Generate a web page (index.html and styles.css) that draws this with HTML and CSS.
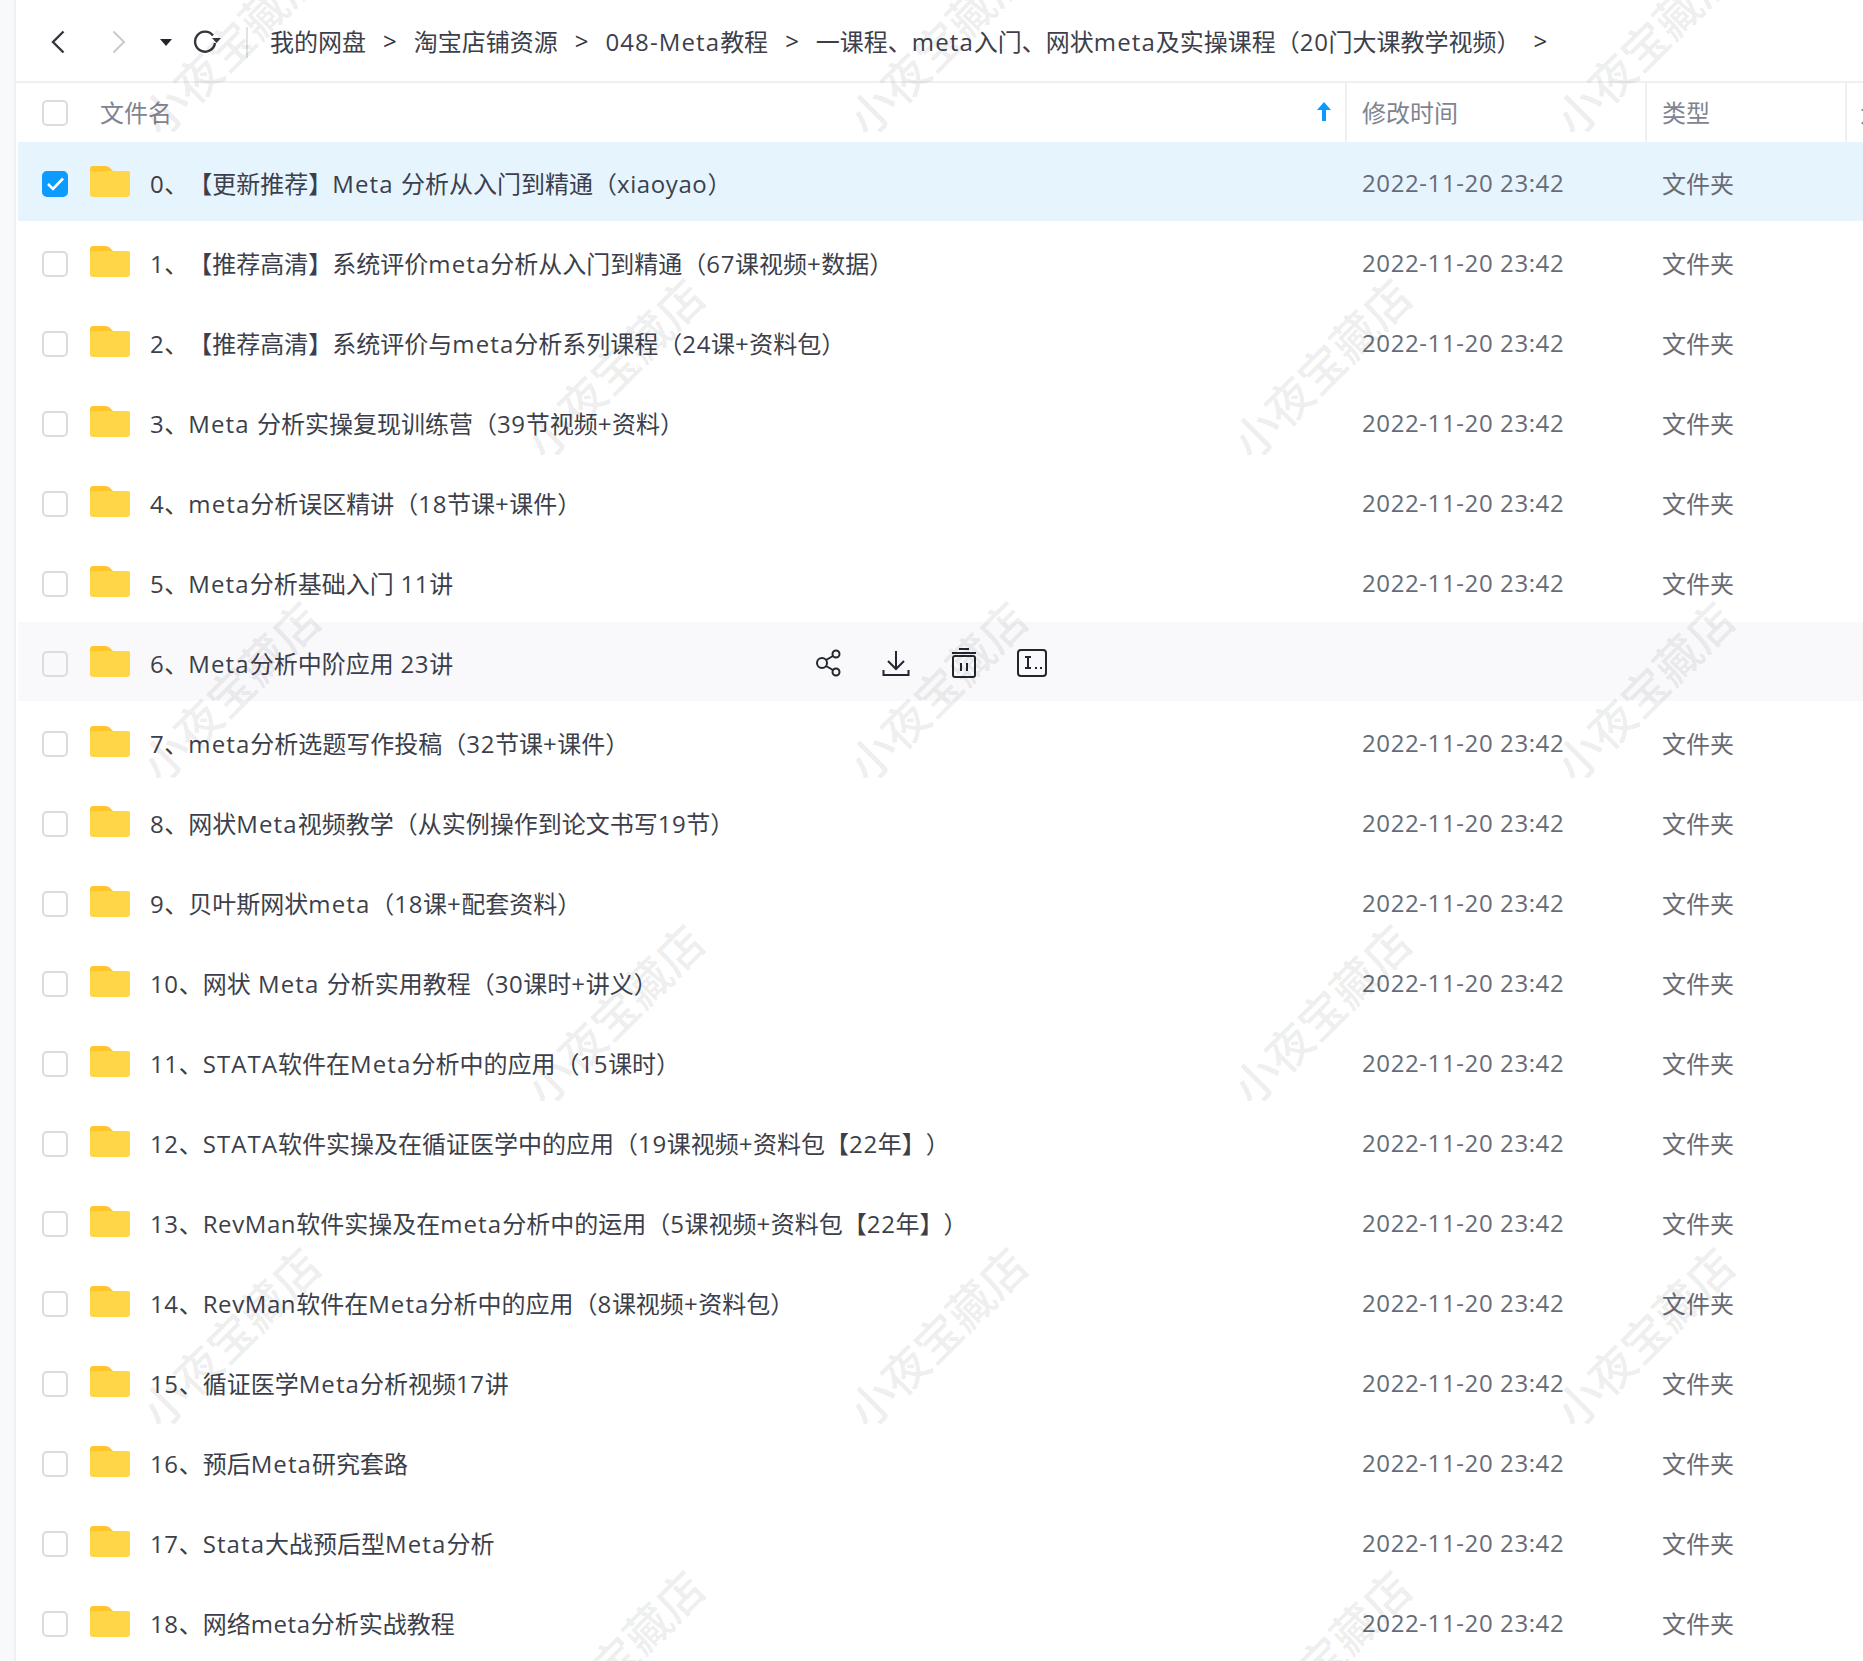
FILE: index.html

```html
<!DOCTYPE html>
<html lang="zh-CN">
<head>
  <meta charset="UTF-8" />
  <title>我的网盘</title>
  <link rel="stylesheet" href="styles.css">
</head>
<body>
  <svg class="defs" width="0" height="0">
    <symbol id="folder" viewBox="0 0 40 31">
      <path d="M0 3a3 3 0 0 1 3-3h12c3 0 4 1 6 3l2 2H37a3 3 0 0 1 3 3v6H0z" fill="#ffc529"/>
      <path d="M0 7a2 2 0 0 1 2-2h35a3 3 0 0 1 3 3v20a3 3 0 0 1-3 3H3a3 3 0 0 1-3-3z" fill="#ffd648"/>
    </symbol>
  </svg>

  <div class="side"></div>

  <div class="main">
    <div class="toolbar">
      <svg class="nav-back" width="14" height="24" viewBox="0 0 14 24"><path d="M12.500 1.500 2 12l10.500 10.500" fill="none" stroke="#33363f" stroke-width="2.400"/></svg>
      <svg class="nav-fwd" width="14" height="24" viewBox="0 0 14 24"><path d="M1.500 1.500 12 12 1.500 22.500" fill="none" stroke="#c9cacd" stroke-width="2"/></svg>
      <span class="nav-drop"></span>
      <svg class="nav-refresh" width="28" height="24" viewBox="0 0 28 24"><path d="M20 5.500A10 10 0 1 0 22 13" fill="none" stroke="#33363f" stroke-width="2.400"/><path d="M19 8h9l-4.500 5z" fill="#33363f"/></svg>
      <span class="nav-line"></span>
      <div class="crumbs">
        <span>我的网盘</span><b>&gt;</b>
        <span>淘宝店铺资源</span><b>&gt;</b>
        <span><span class="la">048-Meta</span>教程</span><b>&gt;</b>
        <span>一课程、<span class="la">meta</span>入门、网状<span class="la">meta</span>及实操课程（<span class="nu">20</span>门大课教学视频）</span><b class="last">&gt;</b>
      </div>
    </div>

    <div class="head">
      <div class="cell-name">
        <span class="check"></span>
        <span class="head-title">文件名</span>
        <svg class="sort" width="16" height="19" viewBox="0 0 16 19"><path d="M8 0 15 8H10V19H6V8H1z" fill="#0b9bff"/></svg>
      </div>
      <div class="head-col">修改时间</div>
      <div class="head-col">类型</div>
      <div class="head-col">大小</div>
    </div>

    <div class="row active">
      <div class="cell-name">
        <span class="check on"><svg width="19" height="15" viewBox="0 0 19 15"><path d="M2 8l5 5L17 2.500" fill="none" stroke="#fff" stroke-width="2.600"/></svg></span>
        <svg class="folder"><use href="#folder"/></svg>
        <span class="name"><span class="nu">0</span>、【更新推荐】<span class="la">Meta </span>分析从入门到精通（<span class="nu">xiaoyao</span>）</span>
      </div>
      <div class="date">2022-11-20 23:42</div><div class="type">文件夹</div>
    </div>
    <div class="row">
      <div class="cell-name"><span class="check"></span><svg class="folder"><use href="#folder"/></svg><span class="name"><span class="nu">1</span>、【推荐高清】系统评价<span class="la">meta</span>分析从入门到精通（<span class="nu">67</span>课视频<span class="nu">+</span>数据）</span></div>
      <div class="date">2022-11-20 23:42</div><div class="type">文件夹</div>
    </div>
    <div class="row">
      <div class="cell-name"><span class="check"></span><svg class="folder"><use href="#folder"/></svg><span class="name"><span class="nu">2</span>、【推荐高清】系统评价与<span class="la">meta</span>分析系列课程（<span class="nu">24</span>课<span class="nu">+</span>资料包）</span></div>
      <div class="date">2022-11-20 23:42</div><div class="type">文件夹</div>
    </div>
    <div class="row">
      <div class="cell-name"><span class="check"></span><svg class="folder"><use href="#folder"/></svg><span class="name"><span class="nu">3</span>、<span class="la">Meta </span>分析实操复现训练营（<span class="nu">39</span>节视频<span class="nu">+</span>资料）</span></div>
      <div class="date">2022-11-20 23:42</div><div class="type">文件夹</div>
    </div>
    <div class="row">
      <div class="cell-name"><span class="check"></span><svg class="folder"><use href="#folder"/></svg><span class="name"><span class="nu">4</span>、<span class="la">meta</span>分析误区精讲（<span class="nu">18</span>节课<span class="nu">+</span>课件）</span></div>
      <div class="date">2022-11-20 23:42</div><div class="type">文件夹</div>
    </div>
    <div class="row">
      <div class="cell-name"><span class="check"></span><svg class="folder"><use href="#folder"/></svg><span class="name"><span class="nu">5</span>、<span class="la">Meta</span>分析基础入门<span class="nu"> 11</span>讲</span></div>
      <div class="date">2022-11-20 23:42</div><div class="type">文件夹</div>
    </div>
    <div class="row hover">
      <div class="cell-name">
        <span class="check"></span><svg class="folder"><use href="#folder"/></svg>
        <span class="name name-fixed"><span class="nu">6</span>、<span class="la">Meta</span>分析中阶应用<span class="nu"> 23</span>讲</span>
        <div class="actions">
          <svg width="30" height="30" viewBox="0 0 30 30" fill="none" stroke="#23262e" stroke-width="2"><circle cx="9" cy="15" r="5"/><circle cx="23" cy="6" r="3.500"/><circle cx="23" cy="24" r="3.500"/><path d="M13 12l7-4M13 18l7 4"/></svg>
          <svg width="30" height="30" viewBox="0 0 30 30" fill="none" stroke="#23262e" stroke-width="2"><path d="M15 3v17M7 13l8 8 8-8M2.500 22v5h25v-5"/></svg>
          <svg width="30" height="30" viewBox="0 0 30 30" fill="none" stroke="#23262e" stroke-width="2"><path d="M10 1h10M3 5h24"/><rect x="4" y="8" width="22" height="21" rx="2"/><path d="M12 15v8M18 15v8"/></svg>
          <svg width="30" height="30" viewBox="0 0 30 30" fill="none" stroke="#23262e" stroke-width="2"><rect x="1" y="2" width="28" height="26" rx="3"/><path d="M8 9h6M8 20h6M11 9v11M18 20h2M23 20h2"/></svg>
        </div>
      </div>
      <div class="date"></div><div class="type"></div>
    </div>
    <div class="row">
      <div class="cell-name"><span class="check"></span><svg class="folder"><use href="#folder"/></svg><span class="name"><span class="nu">7</span>、<span class="la">meta</span>分析选题写作投稿（<span class="nu">32</span>节课<span class="nu">+</span>课件）</span></div>
      <div class="date">2022-11-20 23:42</div><div class="type">文件夹</div>
    </div>
    <div class="row">
      <div class="cell-name"><span class="check"></span><svg class="folder"><use href="#folder"/></svg><span class="name"><span class="nu">8</span>、网状<span class="la">Meta</span>视频教学（从实例操作到论文书写<span class="nu">19</span>节）</span></div>
      <div class="date">2022-11-20 23:42</div><div class="type">文件夹</div>
    </div>
    <div class="row">
      <div class="cell-name"><span class="check"></span><svg class="folder"><use href="#folder"/></svg><span class="name"><span class="nu">9</span>、贝叶斯网状<span class="la">meta</span>（<span class="nu">18</span>课<span class="nu">+</span>配套资料）</span></div>
      <div class="date">2022-11-20 23:42</div><div class="type">文件夹</div>
    </div>
    <div class="row">
      <div class="cell-name"><span class="check"></span><svg class="folder"><use href="#folder"/></svg><span class="name"><span class="nu">10</span>、网状<span class="la"> Meta </span>分析实用教程（<span class="nu">30</span>课时<span class="nu">+</span>讲义）</span></div>
      <div class="date">2022-11-20 23:42</div><div class="type">文件夹</div>
    </div>
    <div class="row">
      <div class="cell-name"><span class="check"></span><svg class="folder"><use href="#folder"/></svg><span class="name"><span class="nu">11</span>、<span class="la">STATA</span>软件在<span class="la">Meta</span>分析中的应用（<span class="nu">15</span>课时）</span></div>
      <div class="date">2022-11-20 23:42</div><div class="type">文件夹</div>
    </div>
    <div class="row">
      <div class="cell-name"><span class="check"></span><svg class="folder"><use href="#folder"/></svg><span class="name"><span class="nu">12</span>、<span class="la">STATA</span>软件实操及在循证医学中的应用（<span class="nu">19</span>课视频<span class="nu">+</span>资料包【<span class="nu">22</span>年】）</span></div>
      <div class="date">2022-11-20 23:42</div><div class="type">文件夹</div>
    </div>
    <div class="row">
      <div class="cell-name"><span class="check"></span><svg class="folder"><use href="#folder"/></svg><span class="name"><span class="nu">13</span>、<span class="nu">RevMan</span>软件实操及在<span class="la">meta</span>分析中的运用（<span class="nu">5</span>课视频<span class="nu">+</span>资料包【<span class="nu">22</span>年】）</span></div>
      <div class="date">2022-11-20 23:42</div><div class="type">文件夹</div>
    </div>
    <div class="row">
      <div class="cell-name"><span class="check"></span><svg class="folder"><use href="#folder"/></svg><span class="name"><span class="nu">14</span>、<span class="nu">RevMan</span>软件在<span class="la">Meta</span>分析中的应用（<span class="nu">8</span>课视频<span class="nu">+</span>资料包）</span></div>
      <div class="date">2022-11-20 23:42</div><div class="type">文件夹</div>
    </div>
    <div class="row">
      <div class="cell-name"><span class="check"></span><svg class="folder"><use href="#folder"/></svg><span class="name"><span class="nu">15</span>、循证医学<span class="la">Meta</span>分析视频<span class="nu">17</span>讲</span></div>
      <div class="date">2022-11-20 23:42</div><div class="type">文件夹</div>
    </div>
    <div class="row">
      <div class="cell-name"><span class="check"></span><svg class="folder"><use href="#folder"/></svg><span class="name"><span class="nu">16</span>、预后<span class="la">Meta</span>研究套路</span></div>
      <div class="date">2022-11-20 23:42</div><div class="type">文件夹</div>
    </div>
    <div class="row">
      <div class="cell-name"><span class="check"></span><svg class="folder"><use href="#folder"/></svg><span class="name"><span class="nu">17</span>、<span class="la">Stata</span>大战预后型<span class="la">Meta</span>分析</span></div>
      <div class="date">2022-11-20 23:42</div><div class="type">文件夹</div>
    </div>
    <div class="row">
      <div class="cell-name"><span class="check"></span><svg class="folder"><use href="#folder"/></svg><span class="name"><span class="nu">18</span>、网络<span class="nu">meta</span>分析实战教程</span></div>
      <div class="date">2022-11-20 23:42</div><div class="type">文件夹</div>
    </div>
  </div>

  <div class="marks">
    <div class="mark-row"><span>小夜宝藏店</span><span>小夜宝藏店</span><span>小夜宝藏店</span></div>
    <div class="mark-row shift"><span>小夜宝藏店</span><span>小夜宝藏店</span></div>
    <div class="mark-row"><span>小夜宝藏店</span><span>小夜宝藏店</span><span>小夜宝藏店</span></div>
    <div class="mark-row shift"><span>小夜宝藏店</span><span>小夜宝藏店</span></div>
    <div class="mark-row"><span>小夜宝藏店</span><span>小夜宝藏店</span><span>小夜宝藏店</span></div>
    <div class="mark-row shift"><span>小夜宝藏店</span><span>小夜宝藏店</span></div>
  </div>
</body>
</html>
```

FILE: styles.css

```css
html, body {
  height: 100%;
}
body {
  position: relative;
  display: flex;
  margin: 0;
  height: 1661px;
  overflow: hidden;
  background: #fff;
  font-family: "Open Sans", "Noto Sans CJK SC", sans-serif;
  font-size: 24px;
  color: #3c3f4b;
  text-spacing-trim: space-all;
}
.defs {
  position: absolute;
}
.side {
  flex: 0 0 14px;
  background: #f8f9fb;
  border-right: 2px solid #eff0f3;
}
.main {
  flex: 1;
  min-width: 0;
  padding-left: 2px;
}
.la {
  letter-spacing: 1.1px;
}
.nu {
  letter-spacing: 0.6px;
}

/* toolbar */
.toolbar {
  display: flex;
  align-items: center;
  height: 83px;
  padding-top: 3px;
  box-sizing: border-box;
  margin-left: -2px;
  border-bottom: 2px solid #f0f0f1;
  box-shadow: inset 32px 2px 0 #fff, inset 0 2px 0 #f0f0f1;
  white-space: nowrap;
}
.nav-back {
  margin-left: 35px;
}
.nav-fwd {
  margin-left: 47px;
}
.nav-drop {
  margin-left: 34px;
  border-left: 6px solid transparent;
  border-right: 6px solid transparent;
  border-top: 7px solid #23262e;
}
.nav-refresh {
  margin-left: 21px;
}
.nav-line {
  margin-left: 25px;
  width: 2px;
  height: 31px;
  background: #e3e3e5;
}
.crumbs {
  display: flex;
  align-items: center;
  gap: 17px;
  margin-left: 22px;
  margin-top: -3px;
}
.crumbs b {
  font-weight: 400;
  color: #33363f;
}
.crumbs .last {
  margin-left: -4px;
}

/* table */
.head, .row {
  display: grid;
  grid-template-columns: 1327px 300px 200px 18px;
  align-items: center;
}
.head {
  height: 59px;
  color: #7f8490;
}
.head > div {
  display: flex;
  align-items: center;
  height: 100%;
}
.head-col {
  border-left: 2px solid #f0f0f1;
  padding-left: 15px;
  padding-bottom: 3px;
  box-sizing: border-box;
  white-space: nowrap;
  overflow: hidden;
}
.head-col:last-child {
  padding-left: 13px;
}
.head-title {
  margin-left: 32px;
  margin-top: -3px;
  flex: 1;
}
.sort {
  margin-right: 13px;
  margin-top: -2px;
}
.row {
  height: 80px;
  padding-top: 4px;
  box-sizing: border-box;
  border-bottom: 1px solid transparent;
  background-clip: padding-box;
}
.row.active {
  background-color: #e6f4fe;
}
.row.hover {
  background-color: #f9f9fb;
}
.cell-name {
  display: flex;
  align-items: center;
  padding-left: 24px;
}
.check {
  flex: 0 0 auto;
  display: flex;
  align-items: center;
  justify-content: center;
  width: 26px;
  height: 26px;
  box-sizing: border-box;
  border: 2px solid #dcdcdf;
  border-radius: 5px;
}
.check.on {
  background: #0d9bff;
  border-color: #0d9bff;
}
.folder {
  flex: 0 0 auto;
  width: 40px;
  height: 31px;
  margin-left: 22px;
  margin-top: -4px;
}
.name {
  margin-left: 20px;
  margin-top: -3px;
  white-space: nowrap;
}
.name-fixed {
  width: 663px;
}
.actions {
  display: flex;
  gap: 38px;
  margin-top: -2px;
}
.date, .type {
  padding-left: 17px;
  margin-top: -2px;
  color: #676b76;
  white-space: nowrap;
}
.date {
  letter-spacing: 0.6px;
}
.type {
  margin-top: -3px;
}

/* watermark */
.marks {
  position: absolute;
  left: -5px;
  top: -118px;
  width: 100%;
  pointer-events: none;
}
.mark-row {
  display: flex;
  align-items: center;
  gap: 457px;
  height: 323px;
  padding-left: 109px;
}
.mark-row.shift {
  padding-left: 493px;
}
.mark-row span {
  flex: 0 0 250px;
  text-align: center;
  font-family: "Noto Sans CJK SC", sans-serif;
  font-size: 46px;
  font-weight: 500;
  line-height: 60px;
  white-space: nowrap;
  color: rgba(0, 0, 0, 0.085);
  transform: rotate(-45deg);
}
```
